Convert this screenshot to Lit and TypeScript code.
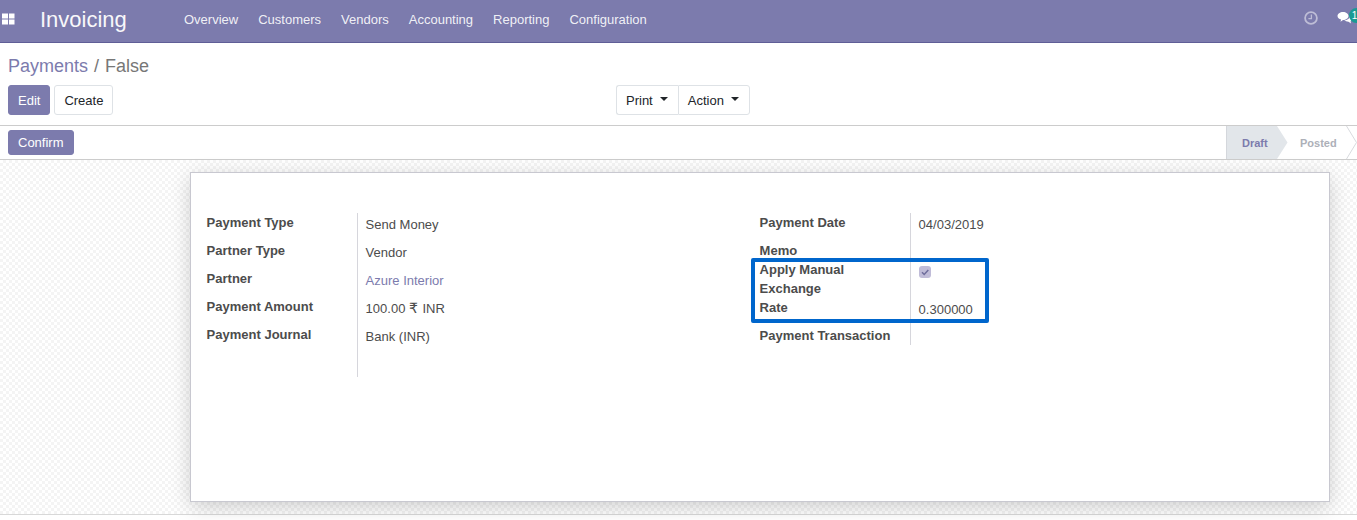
import { LitElement, html, css, svg } from "lit";
import { customElement } from "lit/decorators.js";

const MENU = ["Overview", "Customers", "Vendors", "Accounting", "Reporting", "Configuration"];

const appsIcon = html`<svg class="apps" width="14" height="12" viewBox="0 0 14 12">
  <path fill="#fff" d="M1 .5h6v5H1zM8 .5h5.500v5H8zM1 6.500h6v5H1zM8 6.500h5.500v5H8z" />
</svg>`;

const clockIcon = html`<svg class="clock" width="14" height="14" viewBox="0 0 14 14">
  <circle cx="7" cy="7" r="5.900" fill="none" stroke="#fff" stroke-width="1.800" />
  <path d="M7.400 3.600v4H4.400" fill="none" stroke="#fff" stroke-width="1.300" />
</svg>`;

const chatIcon = html`<svg class="chat" width="16" height="14" viewBox="0 0 16 14">
  <path fill="#fff" d="M6 1c3 0 5.500 1.700 5.500 4S9 9 6 9L3.500 10.800l.6-2.200C2 8 .5 6.600.5 5 .5 2.700 3 1 6 1z" />
  <path fill="#fff" d="M12.500 4.500c1.800.5 3 1.700 3 3.100 0 1.200-.8 2.200-2 2.800l.6 2-2.600-1.700c-1.800 0-3.300-.5-4.200-1.400 3 0 5.500-1.800 5.500-4.300 0-.2 0-.3-.3-.5z" />
</svg>`;

const checkMark = svg`<path d="M3 6.300l2.200 2.200L9.300 4" fill="none" stroke="#6f6d9c" stroke-width="1.500" />`;

@customElement("app-root")
export class AppRoot extends LitElement {
  static styles = css`
    :host {
      display: block;
      width: 1357px;
      height: 520px;
      overflow: hidden;
      background: #fff;
      font-family: "Liberation Sans", Arial, sans-serif;
      font-size: 13px;
      line-height: 19px;
      color: #4c4c4c;
    }

    .navbar {
      display: flex;
      align-items: center;
      height: 42px;
      border-bottom: 1px solid #5f5e97;
      background: #7c7bad;
      color: rgba(255, 255, 255, 0.9);
      overflow: hidden;
    }
    .apps {
      margin-left: 1px;
      margin-top: -5px;
      flex: none;
    }
    .brand {
      margin-left: 25px;
      margin-top: -2px;
      width: 134px;
      font-size: 22px;
      line-height: 26px;
      color: #fff;
      opacity: 0.95;
    }
    .menu {
      display: flex;
      gap: 20px;
      margin-left: 10px;
      margin-top: -3px;
    }
    .systray {
      display: flex;
      align-items: center;
      margin-left: auto;
      margin-top: -6px;
      flex: none;
    }
    .clock {
      opacity: 0.5;
      display: block;
    }
    .chat-wrap {
      position: relative;
      margin-left: 19px;
      width: 20px;
      height: 14px;
    }
    .chat {
      display: block;
    }
    .badge {
      position: absolute;
      left: 12px;
      top: -3px;
      width: 15px;
      height: 15px;
      border-radius: 50%;
      background: #1a9a93;
      color: #fff;
      font-size: 10px;
      line-height: 15px;
      text-align: center;
      text-indent: -4px;
    }

    .control {
      height: 82px;
      padding: 0 8px;
      border-bottom: 1px solid #cccccc;
      box-sizing: content-box;
    }
    .breadcrumb {
      display: flex;
      padding-top: 11px;
      height: 31px;
      box-sizing: border-box;
      font-size: 18px;
      line-height: 24px;
      color: #777;
    }
    .breadcrumb .link {
      color: #7c7bad;
    }
    .breadcrumb .sep {
      margin: 0 6px;
    }
    .actions {
      display: grid;
      grid-template-columns: 608px auto;
      margin-top: 11px;
    }
    .btn-row {
      display: flex;
      gap: 4px;
    }
    .btn {
      box-sizing: border-box;
      height: 30px;
      padding: 1px 9px 0;
      border: 1px solid #dee2e6;
      border-radius: 3px;
      background: #fff;
      color: #212529;
      font: inherit;
      line-height: 28px;
    }
    .btn.primary {
      background: #7c7bad;
      border-color: #7c7bad;
      color: #fff;
    }
    .btn-group {
      display: flex;
    }
    .btn-group .btn {
      display: flex;
      align-items: center;
      gap: 7px;
      border-radius: 0;
    }
    .btn-group .btn:first-child {
      border-radius: 3px 0 0 3px;
      border-right: none;
      padding-right: 10px;
    }
    .btn-group .btn:last-child {
      border-radius: 0 3px 3px 0;
      padding-right: 10px;
    }
    .caret {
      width: 0;
      height: 0;
      margin-top: -3px;
      border-left: 4px solid transparent;
      border-right: 4px solid transparent;
      border-top: 4px solid #212529;
    }

    .statusbar {
      display: flex;
      justify-content: space-between;
      height: 33px;
      padding-left: 8px;
      border-bottom: 1px solid #cccccc;
    }
    .confirm {
      height: 25px;
      margin-top: 4px;
      padding-top: 0;
      line-height: 23px;
    }
    .steps {
      display: flex;
      font-size: 11px;
      font-weight: bold;
      line-height: 35px;
    }
    .step.current {
      width: 51px;
      box-sizing: border-box;
      background: #e2e6ea;
      border-left: 1px solid #d4d7dc;
      padding-left: 15px;
      color: #7c7bad;
    }
    .step.todo {
      width: 58px;
      padding-left: 12px;
      box-sizing: border-box;
      color: #adb0b8;
    }
    .arrow {
      display: block;
      flex: none;
    }

    .content {
      height: 355px;
      padding: 12px 27px 0 190px;
      box-sizing: border-box;
      border-bottom: 1px solid #d8d8d8;
      background-color: #fff;
      background-image: repeating-conic-gradient(#f4f4f4 0 25%, #fff 0 50%);
      background-size: 6px 6px;
    }
    .sheet {
      box-sizing: border-box;
      width: 1140px;
      height: 330px;
      padding: 40px 16px 0 15.6px;
      border: 1px solid #c8c8d0;
      background: #fff;
      box-shadow: 0 5px 20px -1px rgba(0, 0, 0, 0.2);
      display: grid;
      grid-template-columns: 553px 553px;
      align-items: start;
    }
    .group {
      position: relative;
      display: grid;
      grid-template-columns: 150px 1fr;
    }
    .label {
      font-weight: bold;
      padding-right: 8px;
      padding-bottom: 9px;
    }
    .label.narrow {
      padding-right: 60px;
    }
    .value {
      border-left: 1px solid #d6d6dc;
      padding: 2px 0 7px 8px;
    }
    .value a {
      color: #7c7bad;
      text-decoration: none;
    }
    .rupee {
      font-family: "DejaVu Sans", sans-serif;
      font-size: 14px;
      margin-right: 1px;
    }
    .tight {
      padding-bottom: 0;
    }
    .value.tight {
      padding-top: 0;
    }
    .spacer {
      height: 24px;
      padding: 0;
    }
    .value.spacer {
      padding: 0;
    }
    .check {
      display: block;
      width: 12px;
      height: 12px;
      margin-top: 6px;
      margin-bottom: 22px;
      border-radius: 3px;
      background: #c0bcd8;
    }
    .highlight {
      position: absolute;
      left: -9px;
      top: 45px;
      width: 238px;
      height: 65px;
      box-sizing: border-box;
      border: 4px solid #0066cc;
      border-radius: 2px;
      pointer-events: none;
    }
  `;

  render() {
    return html`
      <nav class="navbar">
        ${appsIcon}
        <div class="brand">Invoicing</div>
        <div class="menu">${MENU.map((m) => html`<span>${m}</span>`)}</div>
        <div class="systray">
          ${clockIcon}
          <div class="chat-wrap">${chatIcon}<span class="badge">1</span></div>
        </div>
      </nav>

      <div class="control">
        <div class="breadcrumb"><span class="link">Payments</span><span class="sep">/</span><span>False</span></div>
        <div class="actions">
          <div class="btn-row">
            <button class="btn primary">Edit</button>
            <button class="btn">Create</button>
          </div>
          <div class="btn-group">
            <button class="btn">Print <span class="caret"></span></button>
            <button class="btn">Action <span class="caret"></span></button>
          </div>
        </div>
      </div>

      <div class="statusbar">
        <button class="btn primary confirm">Confirm</button>
        <div class="steps">
          <div class="step current">Draft</div>
          <svg class="arrow" width="11" height="33" viewBox="0 0 11 33">
            <path d="M0 0L10.500 16.500L0 33z" fill="#e2e6ea" />
          </svg>
          <div class="step todo">Posted</div>
          <svg class="arrow" width="11" height="33" viewBox="0 0 11 33">
            <path d="M0.500 0L10.500 16.500L0.500 33" fill="none" stroke="#d8dade" />
          </svg>
        </div>
      </div>

      <div class="content">
        <div class="sheet">
          <div class="group">
            <div class="label">Payment Type</div>
            <div class="value">Send Money</div>
            <div class="label">Partner Type</div>
            <div class="value">Vendor</div>
            <div class="label">Partner</div>
            <div class="value"><a>Azure Interior</a></div>
            <div class="label">Payment Amount</div>
            <div class="value">100.00 <span class="rupee">₹</span> INR</div>
            <div class="label">Payment Journal</div>
            <div class="value">Bank (INR)</div>
            <div class="spacer"></div>
            <div class="value spacer"></div>
          </div>
          <div class="group">
            <div class="label">Payment Date</div>
            <div class="value">04/03/2019</div>
            <div class="label tight">Memo</div>
            <div class="value tight"></div>
            <div class="label narrow">Apply Manual Exchange Rate</div>
            <div class="value tight">
              <svg class="check" viewBox="0 0 12 12">${checkMark}</svg>
              0.300000
            </div>
            <div class="label tight">Payment Transaction</div>
            <div class="value tight"></div>
            <div class="highlight"></div>
          </div>
        </div>
      </div>
    `;
  }
}
